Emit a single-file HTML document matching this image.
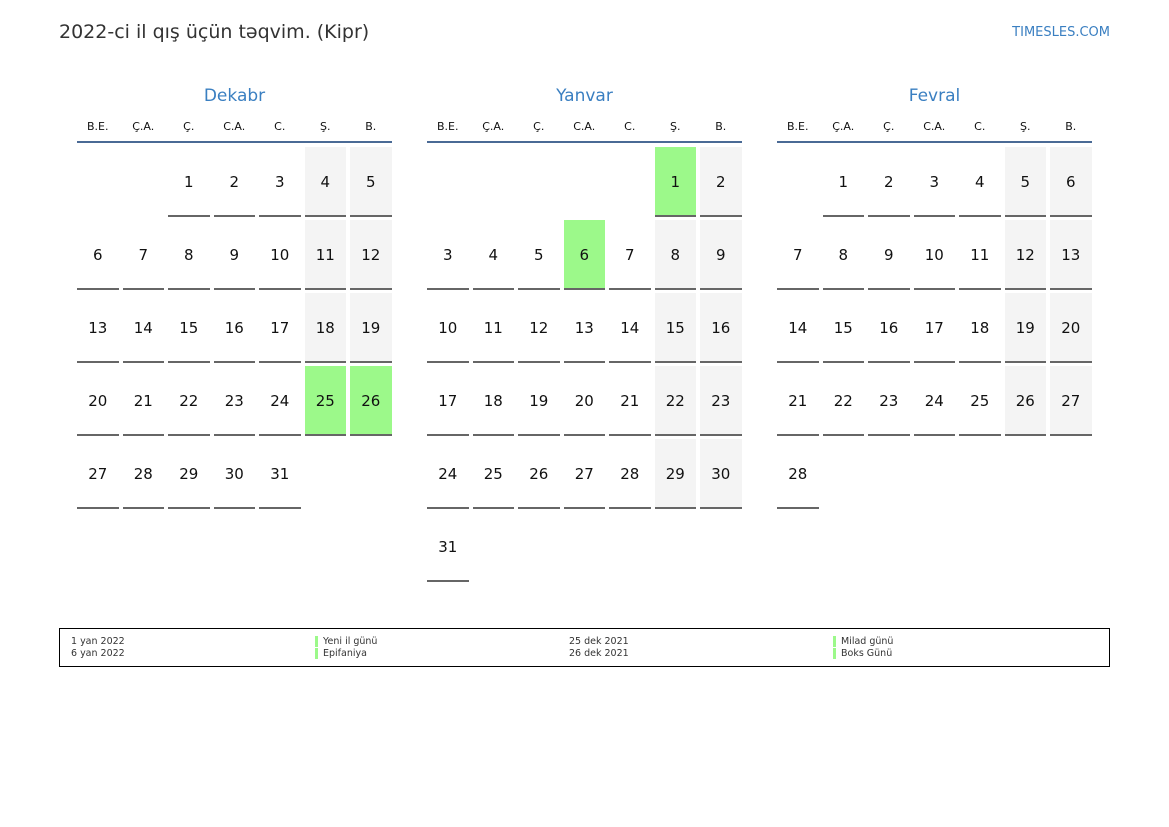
<!DOCTYPE html>
<html><head><meta charset="utf-8"><style>
body{margin:0;width:1169px;height:827px;background:#fff;font-family:"DejaVu Sans","Liberation Sans",sans-serif;position:relative;overflow:hidden;color:#111}
.title{position:absolute;left:59px;top:21px;font-size:19px;color:#333}
.site{position:absolute;right:59px;top:25px;font-size:13px;color:#3a7fc1}
.m{position:absolute;top:83px;width:315px}
.mn{text-align:center;font-size:17px;color:#3a7fc1;height:26px;line-height:26px}
.hd{display:grid;grid-template-columns:repeat(7,41.5px);column-gap:4px;font-size:11px;text-align:center;height:22px;line-height:22px;margin-top:7px;border-bottom:2px solid #4a6a95;padding-bottom:3px}
.g{display:grid;grid-template-columns:repeat(7,41.5px);column-gap:4px;row-gap:3px;margin-top:4px}
.g div{height:68px;line-height:70px;text-align:center;font-size:15px;border-bottom:2px solid #666}
.g div.e{border-bottom:2px solid transparent}
.g div.w{background:#f4f4f4}
.g div.h{background:#9cf98a}
.leg{position:absolute;left:59px;top:628px;width:1049px;height:37px;border:1px solid #000;font-size:9.5px;color:#333}
.leg span{position:absolute;line-height:12px}
.leg i{position:absolute;width:3px;height:11px;background:#9cf98a}
</style></head><body>
<div class="title">2022-ci il qış üçün təqvim. (Kipr)</div>
<div class="site">TIMESLES.COM</div>

<div class="m" style="left:77px">
<div class="mn">Dekabr</div>
<div class="hd"><span>B.E.</span><span>Ç.A.</span><span>Ç.</span><span>C.A.</span><span>C.</span><span>Ş.</span><span>B.</span></div>
<div class="g">
<div class="e"></div><div class="e"></div><div>1</div><div>2</div><div>3</div><div class="w">4</div><div class="w">5</div>
<div>6</div><div>7</div><div>8</div><div>9</div><div>10</div><div class="w">11</div><div class="w">12</div>
<div>13</div><div>14</div><div>15</div><div>16</div><div>17</div><div class="w">18</div><div class="w">19</div>
<div>20</div><div>21</div><div>22</div><div>23</div><div>24</div><div class="h">25</div><div class="h">26</div>
<div>27</div><div>28</div><div>29</div><div>30</div><div>31</div><div class="e"></div><div class="e"></div>
</div></div>

<div class="m" style="left:427px">
<div class="mn">Yanvar</div>
<div class="hd"><span>B.E.</span><span>Ç.A.</span><span>Ç.</span><span>C.A.</span><span>C.</span><span>Ş.</span><span>B.</span></div>
<div class="g">
<div class="e"></div><div class="e"></div><div class="e"></div><div class="e"></div><div class="e"></div><div class="h">1</div><div class="w">2</div>
<div>3</div><div>4</div><div>5</div><div class="h">6</div><div>7</div><div class="w">8</div><div class="w">9</div>
<div>10</div><div>11</div><div>12</div><div>13</div><div>14</div><div class="w">15</div><div class="w">16</div>
<div>17</div><div>18</div><div>19</div><div>20</div><div>21</div><div class="w">22</div><div class="w">23</div>
<div>24</div><div>25</div><div>26</div><div>27</div><div>28</div><div class="w">29</div><div class="w">30</div>
<div>31</div>
</div></div>

<div class="m" style="left:777px">
<div class="mn">Fevral</div>
<div class="hd"><span>B.E.</span><span>Ç.A.</span><span>Ç.</span><span>C.A.</span><span>C.</span><span>Ş.</span><span>B.</span></div>
<div class="g">
<div class="e"></div><div>1</div><div>2</div><div>3</div><div>4</div><div class="w">5</div><div class="w">6</div>
<div>7</div><div>8</div><div>9</div><div>10</div><div>11</div><div class="w">12</div><div class="w">13</div>
<div>14</div><div>15</div><div>16</div><div>17</div><div>18</div><div class="w">19</div><div class="w">20</div>
<div>21</div><div>22</div><div>23</div><div>24</div><div>25</div><div class="w">26</div><div class="w">27</div>
<div>28</div>
</div></div>

<div class="leg">
<span style="left:11px;top:7px">1 yan 2022</span>
<span style="left:11px;top:19px">6 yan 2022</span>
<i style="left:255px;top:7px"></i><span style="left:263px;top:7px">Yeni il günü</span>
<i style="left:255px;top:19px"></i><span style="left:263px;top:19px">Epifaniya</span>
<span style="left:509px;top:7px">25 dek 2021</span>
<span style="left:509px;top:19px">26 dek 2021</span>
<i style="left:773px;top:7px"></i><span style="left:781px;top:7px">Milad günü</span>
<i style="left:773px;top:19px"></i><span style="left:781px;top:19px">Boks Günü</span>
</div>
</body></html>
